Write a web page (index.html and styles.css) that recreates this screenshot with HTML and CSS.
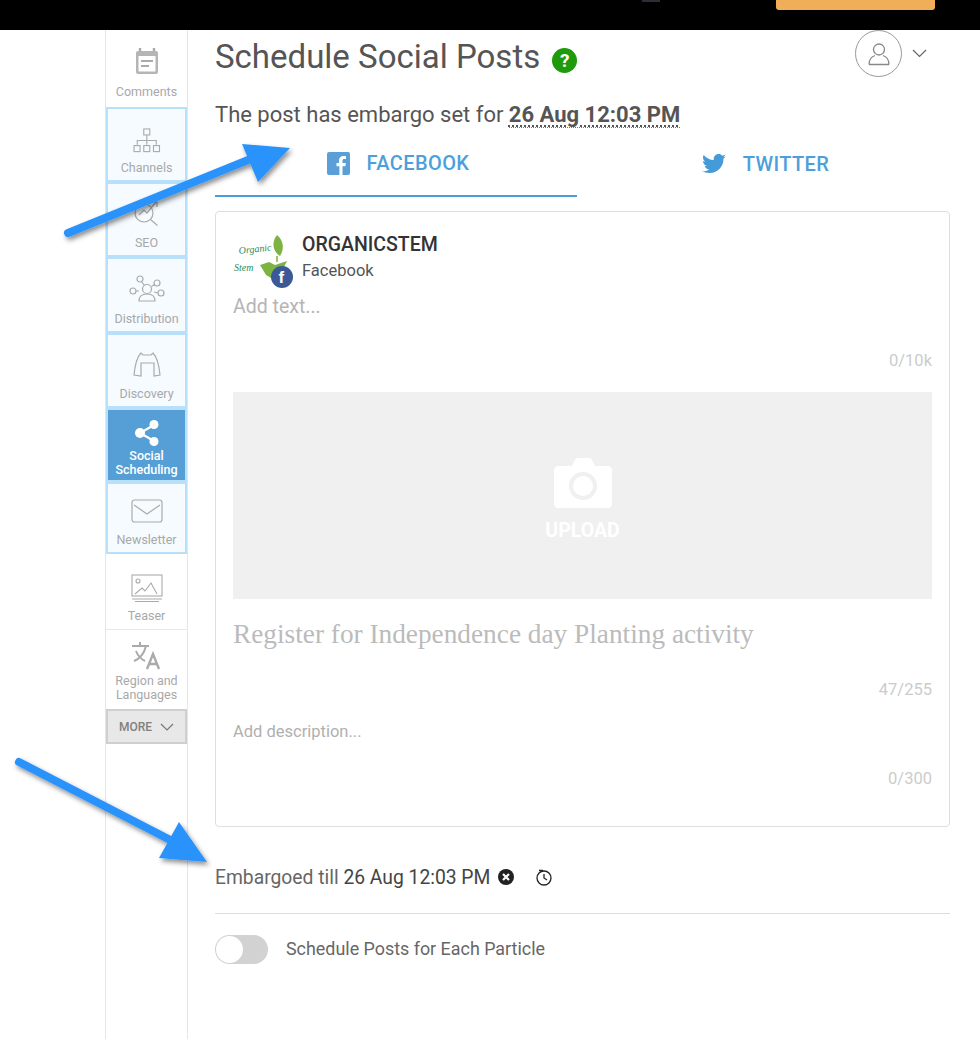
FILE: index.html
```html
<!DOCTYPE html>
<html lang="en">
<head>
  <meta charset="UTF-8" />
  <title>Schedule Social Posts</title>
  <link rel="stylesheet" href="styles.css">
</head>
<body>

  <div class="topbar">
    <span class="topbar-chip"></span>
    <span class="topbar-btn"></span>
  </div>

  <div class="layout">
    <nav class="sidebar">
      <a class="nav-item h77">
        <svg class="nav-icon" width="26" height="28" viewBox="0 0 26 28"><path d="M6 1v4M20 1v4" stroke="#aaa" stroke-width="2.4"/><rect x="2" y="4" width="22" height="23" rx="2" fill="#b5b5b5"/><rect x="4.500" y="9" width="17" height="15.500" fill="#fff"/><path d="M7 13h12v2H7zM7 18h8v2H7z" fill="#aaa"/></svg>
        <span>Comments</span>
      </a>
      <a class="nav-item boxed h75">
        <svg class="nav-icon low" width="28" height="25" viewBox="0 0 30 27" fill="none" stroke="#aaa" stroke-width="1.200"><rect x="11.500" y="1" width="6.500" height="6.500"/><path d="M14.800 7.500v6M4.500 18v-4.500h20.500V18M14.800 13.500V18"/><rect x="1" y="19" width="6.500" height="6.500"/><rect x="11.500" y="19" width="6.500" height="6.500"/><rect x="22" y="19" width="6.500" height="6.500"/></svg>
        <span>Channels</span>
      </a>
      <a class="nav-item boxed h75">
        <svg class="nav-icon" width="28" height="28" viewBox="0 0 28 28" fill="none" stroke="#aaa" stroke-width="1.200"><circle cx="11" cy="15" r="9"/><path d="M17.500 21.500l7 6M6 17l5-5 3 3 9-11M19 4h5v5"/></svg>
        <span>SEO</span>
      </a>
      <a class="nav-item boxed h76">
        <svg class="nav-icon" width="36" height="27" viewBox="0 0 36 27" fill="none" stroke="#aaa" stroke-width="1.200"><circle cx="11" cy="4" r="3"/><circle cx="28" cy="8" r="3"/><circle cx="4" cy="16" r="3"/><circle cx="32" cy="18" r="3"/><circle cx="18" cy="14" r="4.500"/><path d="M10 26c0-5 3-7 8-7s8 2 8 7zM12.500 6.500l3 4M25.500 9.500l-3 2M7 16h3M29 18l-4-1"/></svg>
        <span>Distribution</span>
      </a>
      <a class="nav-item boxed h75">
        <svg class="nav-icon" width="28" height="25" viewBox="0 0 28 25" fill="none" stroke="#aaa" stroke-width="1.200"><path d="M1 23C2 13 4 5 8 1l2 2h8l2-2c4 4 6 12 7 22l-6 1V11H8v13z"/></svg>
        <span>Discovery</span>
      </a>
      <a class="nav-item active h74">
        <svg class="nav-icon" width="26" height="28" viewBox="0 0 26 28"><path d="M20 6L6 14l14 8" stroke="#fff" stroke-width="2.200" fill="none"/><circle cx="20" cy="5.500" r="4.500" fill="#fff"/><circle cx="6" cy="14" r="5" fill="#fff"/><circle cx="20" cy="22.500" r="4.500" fill="#fff"/></svg>
        <span>Social<br>Scheduling</span>
      </a>
      <a class="nav-item boxed h72">
        <svg class="nav-icon" width="32" height="24" viewBox="0 0 32 24" fill="none" stroke="#aaa" stroke-width="1.200"><rect x="1" y="1" width="30" height="22" rx="2.500"/><path d="M3 6l13 9 13-9"/></svg>
        <span>Newsletter</span>
      </a>
      <a class="nav-item h76 rule">
        <svg class="nav-icon" width="32" height="28" viewBox="0 0 32 28" fill="none" stroke="#aaa" stroke-width="1.100"><rect x="1" y="1" width="30" height="21"/><circle cx="7" cy="7" r="2"/><path d="M4 20l7-6 3 3 6-8 6 11M1 25h30M4 27.500h24"/></svg>
        <span>Teaser</span>
      </a>
      <a class="nav-item h79 tight">
        <svg class="nav-icon" width="30" height="28" viewBox="0 0 30 28" fill="none" stroke="#aaa" stroke-width="2"><path d="M0 4h17M8 0v4M14 4C12 12 7 17 2 19M4 9c2 5 5 8 9 10"/><path d="M15 27l6-15 6 15M17 22h8" stroke-width="2.400"/></svg>
        <span>Region and<br>Languages</span>
      </a>
      <a class="nav-more">MORE
        <svg width="14" height="8" viewBox="0 0 14 8" fill="none" stroke="#777" stroke-width="1.200"><path d="M1 1l6 6 6-6"/></svg>
      </a>
    </nav>

    <main class="content">
      <header class="page-head">
        <h1>Schedule Social Posts</h1>
        <span class="help">?</span>
        <div class="user">
          <span class="avatar">
            <svg width="24" height="24" viewBox="0 0 24 24" fill="none" stroke="#888" stroke-width="1.300"><circle cx="12" cy="7.500" r="5.500"/><path d="M2 22.500c0-5 3-8 6-9M22 22.500c0-5-3-8-6-9M2 22.500h20"/></svg>
          </span>
          <svg width="15" height="9" viewBox="0 0 15 9" fill="none" stroke="#666" stroke-width="1.200"><path d="M1 1l6.500 6.500L14 1"/></svg>
        </div>
      </header>

      <p class="embargo-note">The post has embargo set for <b>26 Aug 12:03 PM</b></p>

      <div class="tabs">
        <div class="tab selected">
          <svg width="23" height="23" viewBox="0 0 23 23"><rect width="23" height="23" rx="2" fill="#5a9fd8"/><path d="M15.500 23v-8.700h2.900l.5-3.400h-3.400V8.700c0-1 .3-1.600 1.700-1.600h1.800V4.100c-.3 0-1.400-.1-2.600-.1-2.600 0-4.400 1.600-4.400 4.500v2.400H9.500v3.400h2.900V23z" fill="#fff"/></svg>
          FACEBOOK
        </div>
        <div class="tab">
          <svg width="24" height="20" viewBox="0 0 24 20"><path fill="#459ad8" d="M24 2.400c-.9.400-1.800.7-2.800.8 1-.6 1.800-1.600 2.200-2.700-1 .6-2 1-3.100 1.200C19.300.7 18 0 16.600 0c-2.700 0-4.900 2.200-4.900 4.900 0 .4 0 .8.100 1.100C7.700 5.800 4.100 3.900 1.700.9c-.4.700-.7 1.600-.7 2.500 0 1.700.9 3.200 2.200 4.100-.8 0-1.600-.2-2.200-.6v.1c0 2.400 1.700 4.400 3.900 4.800-.4.100-.8.200-1.300.2-.3 0-.6 0-.9-.1.600 2 2.400 3.400 4.600 3.400-1.700 1.300-3.800 2.100-6.100 2.100-.4 0-.8 0-1.200-.1C2.200 18.200 4.800 19 7.500 19c9.100 0 14-7.500 14-14v-.6c1-.7 1.800-1.600 2.500-2z"/></svg>
          TWITTER
        </div>
      </div>

      <section class="card">
        <div class="account">
          <svg class="account-logo" width="60" height="54" viewBox="0 0 60 54">
            <text x="6" y="20" class="logo-script" transform="rotate(-6 6 20)">Organic</text>
            <text x="1" y="37" class="logo-script">Stem</text>
            <path d="M44 1c6 5 8 13 3 21-7-4-9-14-3-21z" fill="#7cb342"/>
            <path d="M44 22v6" stroke="#7cb342" stroke-width="1.500"/>
            <path d="M27 31l9-3 6 3 12-4-5 10-8 3-3 4-5-3z" fill="#7cb342"/>
            <circle cx="49" cy="43" r="11" fill="#3b5998"/>
            <text x="45.500" y="49" class="logo-f">f</text>
          </svg>
          <div class="account-meta">
            <strong>ORGANICSTEM</strong>
            <span>Facebook</span>
          </div>
        </div>
        <div class="add-text">Add text...</div>
        <div class="counter c1">0/10k</div>
        <div class="upload">
          <svg width="58" height="50" viewBox="0 0 58 50"><path fill="#fff" d="M4 8h14l3-6c.5-1 1-2 3-2h11c2 0 2.500 1 3 2l3 6h13c2 0 4 2 4 4v34c0 2-2 4-4 4H4c-2 0-4-2-4-4V12c0-2 2-4 4-4z"/><circle cx="29" cy="28" r="14" fill="#f0f0f0"/><circle cx="29" cy="28" r="10" fill="#fff"/></svg>
          <span>UPLOAD</span>
        </div>
        <div class="headline">Register for Independence day Planting activity</div>
        <div class="counter c2">47/255</div>
        <div class="description">Add description...</div>
        <div class="counter c3">0/300</div>
      </section>

      <div class="embargo-row">
        <span>Embargoed till <span class="date">26 Aug 12:03 PM</span></span>
        <svg class="clear-icon" width="16" height="16" viewBox="0 0 16 16"><circle cx="8" cy="8" r="8" fill="#222"/><path d="M5 5l6 6M11 5l-6 6" stroke="#fff" stroke-width="2.200"/></svg>
        <svg class="clock-icon" width="16" height="17" viewBox="0 0 16 17" fill="none" stroke="#222" stroke-width="1.300"><circle cx="8" cy="9" r="7"/><path d="M8 5v4l3 2M3 1.500h4"/></svg>
      </div>

      <div class="toggle-row">
        <span class="toggle"><span class="knob"></span></span>
        <span class="toggle-label">Schedule Posts for Each Particle</span>
      </div>
    </main>
  </div>

  <!-- annotation arrows drawn over the screenshot -->
  <svg class="arrows" width="980" height="1039" viewBox="0 0 980 1039">
    <defs>
      <filter id="arrowShadow" x="-20%" y="-20%" width="140%" height="140%">
        <feDropShadow dx="2" dy="3" stdDeviation="2.500" flood-color="#000" flood-opacity="0.450"/>
      </filter>
    </defs>
    <g filter="url(#arrowShadow)" fill="#2a93fb">
      <path d="M68 233L258 156" stroke="#2a93fb" stroke-width="8" stroke-linecap="round"/>
      <path d="M242 144L290 148L258 182z"/>
      <path d="M19 762L180 845" stroke="#2a93fb" stroke-width="8" stroke-linecap="round"/>
      <path d="M179 822L207 862L159 858z"/>
    </g>
  </svg>

</body>
</html>
```
FILE: styles.css
```css
* {
  box-sizing: border-box;
}
html, body {
  margin: 0;
  height: 1039px;
  overflow: hidden;
}
body {
  font-family: Roboto, Arial, sans-serif;
  background: #fff;
  color: #555;
}

.topbar {
  height: 30px;
  background: #000;
  display: flex;
  align-items: flex-start;
}
.topbar-chip {
  width: 18px;
  height: 2px;
  margin-left: 642px;
  background: #2e2b3d;
}
.topbar-btn {
  width: 159px;
  height: 10px;
  margin-left: 116px;
  background: #efae57;
  border-radius: 0 0 3px 3px;
}

.layout {
  display: flex;
  height: 1009px;
  padding-left: 105px;
}

/* left rail */
.sidebar {
  width: 83px;
  border-left: 1px solid #e6e6e6;
  border-right: 1px solid #e6e6e6;
  display: flex;
  flex-direction: column;
  flex-shrink: 0;
}
.nav-item {
  display: flex;
  flex-direction: column;
  align-items: center;
  justify-content: flex-end;
  font-size: 12.500px;
  line-height: 13.500px;
  color: #a8a8a8;
  text-align: center;
  padding-bottom: 9px;
}
.nav-icon {
  margin-bottom: 10px;
}
.h72 { height: 72px; }
.h74 { height: 74px; }
.h75 { height: 75px; }
.h76 { height: 76px; }
.h77 { height: 77px; }
.h79 { height: 79px; }
.nav-item.boxed {
  background: #f6fbff;
  border: 2px solid #b8e0fb;
  margin: 0 -1px 0 0;
  width: 81px;
  padding-bottom: 6px;
}
.nav-icon.low {
  margin-bottom: 8px;
}
.nav-item.active {
  background: #569fd6;
  border: 2px solid #b8e0fb;
  width: 81px;
  color: #fff;
  font-weight: 500;
  padding-bottom: 4px;
}
.nav-item.active .nav-icon {
  margin-bottom: 2px;
}
.nav-item.rule {
  border-bottom: 1px solid #e8e8e8;
  padding-bottom: 7px;
}
.nav-item.rule .nav-icon {
  margin-bottom: 7px;
}
.nav-item.tight {
  padding-bottom: 8px;
}
.nav-item.tight .nav-icon {
  margin-bottom: 4px;
}
.nav-more {
  height: 35px;
  background: #e8e8e8;
  border: 2px solid #cfcfcf;
  display: flex;
  align-items: center;
  justify-content: center;
  gap: 8px;
  font-size: 12px;
  font-weight: 500;
  color: #808080;
}

/* main column */
.content {
  width: 735px;
  margin-left: 27px;
  flex-shrink: 0;
}
.page-head {
  height: 54px;
  display: flex;
  align-items: center;
}
.page-head h1 {
  margin: 0 0 2px;
  font-size: 33px;
  font-weight: 400;
  color: #555;
}
.help {
  width: 25px;
  height: 25px;
  margin: 6px 0 0 12px;
  border-radius: 50%;
  background: #1f9a0a;
  color: #fff;
  font-size: 19px;
  font-weight: 700;
  text-align: center;
  line-height: 25px;
}
.user {
  margin-left: auto;
  margin-right: 23px;
  margin-top: -7px;
  display: flex;
  align-items: center;
  gap: 10px;
}
.avatar {
  width: 47px;
  height: 47px;
  border: 1px solid #999;
  border-radius: 50%;
  display: flex;
  align-items: center;
  justify-content: center;
}
.embargo-note {
  margin: 17px 0 0;
  font-size: 22px;
  line-height: 28px;
  height: 30px;
  color: #555;
}
.embargo-note b {
  font-weight: 700;
  border-bottom: 1px dotted #777;
  text-decoration: underline dotted #555;
  text-underline-offset: 3px;
}

.tabs {
  display: flex;
  height: 66px;
}
.tab {
  flex: 1;
  display: flex;
  align-items: center;
  justify-content: center;
  gap: 17px;
  font-size: 20px;
  font-weight: 500;
  letter-spacing: 0.400px;
  color: #4d9fdb;
  padding-left: 4px;
}
.tab.selected {
  border-bottom: 2px solid #4d9fdb;
  flex: 0 0 362px;
}

.card {
  margin-top: 14px;
  height: 616px;
  border: 1px solid #dedede;
  border-radius: 4px;
  padding: 0 17px;
}
.account {
  display: flex;
  height: 66px;
  padding-top: 22px;
}
.account-logo {
  margin: 0 9px 0 0;
  flex-shrink: 0;
}
.logo-script {
  font-family: "Liberation Serif", serif;
  font-style: italic;
  font-size: 10px;
  fill: #2e8b57;
}
.logo-f {
  font-family: "Liberation Sans", sans-serif;
  font-weight: 700;
  font-size: 17px;
  fill: #fff;
}
.account-meta {
  display: flex;
  flex-direction: column;
  gap: 3px;
  margin-top: -1px;
}
.account-meta strong {
  font-size: 19.500px;
  line-height: 24px;
  font-weight: 500;
  color: #333;
}
.account-meta span {
  font-size: 16.500px;
  line-height: 22px;
  color: #555;
}
.add-text {
  margin-top: 17px;
  font-size: 19.500px;
  line-height: 24px;
  color: #b5b5b5;
}
.counter {
  font-size: 16.500px;
  line-height: 20px;
  color: #ccc;
  text-align: right;
}
.c1 { margin-top: 32px; }
.c2 { margin-top: 30px; }
.c3 { margin-top: 26px; }
.upload {
  margin-top: 21px;
  height: 207px;
  background: #f0f0f0;
  display: flex;
  flex-direction: column;
  align-items: center;
  gap: 12px;
  padding-top: 66px;
}
.upload span {
  color: #fff;
  font-size: 19.500px;
  line-height: 21px;
  font-weight: 700;
}
.headline {
  margin-top: 19px;
  font-family: "Liberation Serif", serif;
  font-size: 27.300px;
  line-height: 32px;
  color: #bbb;
}
.description {
  margin-top: 21px;
  font-size: 16.500px;
  line-height: 22px;
  color: #b0b0b0;
}

.embargo-row {
  height: 87px;
  border-bottom: 1px solid #ddd;
  display: flex;
  align-items: center;
  font-size: 19.300px;
  color: #666;
  padding-top: 14px;
}
.embargo-row .date {
  color: #444;
}
.clear-icon {
  margin-left: 8px;
}
.clock-icon {
  margin-left: 22px;
}
.toggle-row {
  display: flex;
  align-items: center;
  gap: 18px;
  margin-top: 21px;
  font-size: 17.900px;
  color: #666;
}
.toggle-label {
  margin-top: -2px;
}
.toggle {
  width: 53px;
  height: 29px;
  background: #d2d2d2;
  border-radius: 15px;
  padding: 1px;
  display: block;
}
.knob {
  display: block;
  width: 27px;
  height: 27px;
  border-radius: 50%;
  background: #fff;
}

.arrows {
  position: absolute;
  left: 0;
  top: 0;
  pointer-events: none;
}
```
